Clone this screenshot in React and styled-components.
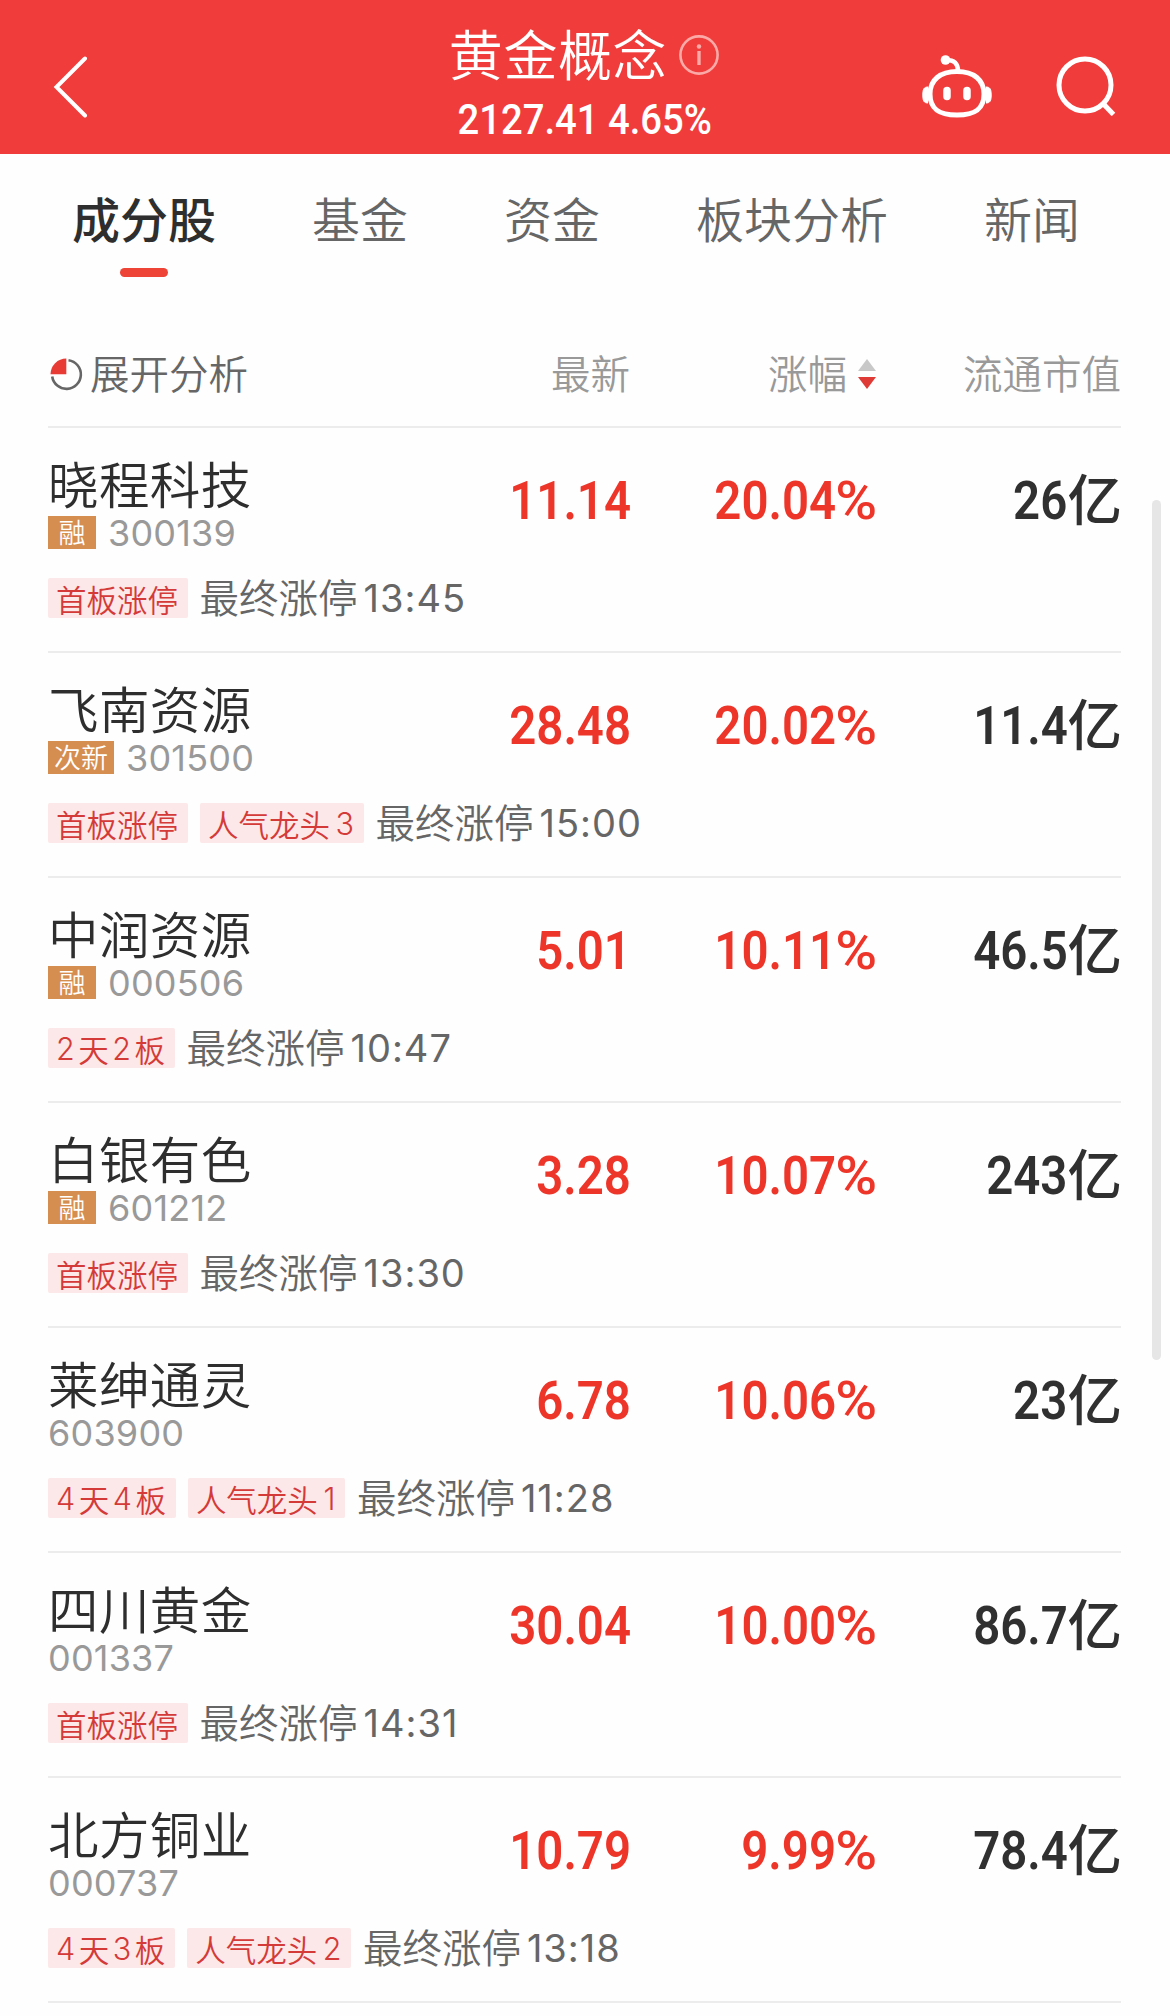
import styled, { createGlobalStyle } from "styled-components"

const stocks = [
  { name: "晓程科技", badge: "融", code: "300139", price: "11.14", change: "20.04", cap: "26", tags: ["首板涨停"], time: "13:45" },
  { name: "飞南资源", badge: "次新", code: "301500", price: "28.48", change: "20.02", cap: "11.4", tags: ["首板涨停", "人气龙头3"], time: "15:00" },
  { name: "中润资源", badge: "融", code: "000506", price: "5.01", change: "10.11", cap: "46.5", tags: ["2天2板"], time: "10:47" },
  { name: "白银有色", badge: "融", code: "601212", price: "3.28", change: "10.07", cap: "243", tags: ["首板涨停"], time: "13:30" },
  { name: "莱绅通灵", code: "603900", price: "6.78", change: "10.06", cap: "23", tags: ["4天4板", "人气龙头1"], time: "11:28" },
  { name: "四川黄金", code: "001337", price: "30.04", change: "10.00", cap: "86.7", tags: ["首板涨停"], time: "14:31" },
  { name: "北方铜业", code: "000737", price: "10.79", change: "9.99", cap: "78.4", tags: ["4天3板", "人气龙头2"], time: "13:18" },
]

const tabs = ["成分股", "基金", "资金", "板块分析", "新闻"]

const BackIcon = () => (
  <svg width="40" height="64" viewBox="0 0 40 64" fill="none" stroke="#fff" strokeWidth="4" strokeLinecap="round">
    <path d="M33 4.500 4.500 33 33 61.500" />
  </svg>
)

const InfoIcon = () => (
  <svg width="40" height="40" viewBox="0 0 40 40" fill="none" stroke="#fbaaa8" strokeWidth="2.6">
    <circle cx="20" cy="20" r="18.6" />
    <path d="M20 16v14" strokeWidth="3.4" />
    <circle cx="20" cy="11.5" r="2.2" fill="#fbaaa8" stroke="none" />
  </svg>
)

const RobotIcon = () => (
  <svg width="70" height="66" viewBox="0 0 70 66" fill="none" stroke="#fff">
    <path d="M35 17.500C52 17.500 62 26 62 40C62 55 53 61 35 61C17 61 8 55 8 40C8 26 18 17.500 35 17.500Z" strokeWidth="5" />
    <path d="M36 17C36 10 33 6 24 6" strokeWidth="4.500" />
    <circle cx="23.500" cy="6" r="4.800" fill="#fff" stroke="none" />
    <path d="M6 33C2 33 0.800 35 0.800 41C0.800 47 2 49 6 49M64 33C68 33 69.200 35 69.200 41C69.200 47 68 49 64 49" fill="#fff" strokeWidth="1" />
    <path d="M25 36.500v6M45 36.500v6" strokeWidth="7.500" strokeLinecap="round" />
  </svg>
)

const SearchIcon = () => (
  <svg width="62" height="62" viewBox="0 0 62 62" fill="none" stroke="#fff" strokeWidth="5">
    <circle cx="29" cy="31" r="26" />
    <path d="M47 49.500 57.500 60.500" />
  </svg>
)

const PieIcon = () => (
  <svg width="33" height="33" viewBox="0 0 33 33">
    <path d="M18.500 2.200A14.400 14.400 0 1 1 2.200 18.500" fill="none" stroke="#666" strokeWidth="2.600" />
    <path d="M16.300 0.500V16.300H0.500A15.800 15.800 0 0 1 16.300 0.500Z" fill="#e93b35" />
  </svg>
)

const SortIcon = () => (
  <svg width="18" height="30" viewBox="0 0 18 30">
    <path d="M9 0 18 12H0Z" fill="#c8c8c8" />
    <path d="M9 30 18 18H0Z" fill="#e03a36" />
  </svg>
)

// digits inside a tag use the latin font, so split them from the text
const Tag = ({ text }) => (
  <TagBox>
    {text.match(/\d+|\D+/g).map((part, i) => (
      <TagPart key={i} $number={/\d/.test(part)}>{part}</TagPart>
    ))}
  </TagBox>
)

const StockRow = ({ stock }) => (
  <Row>
    <Quote>
      <div>
        <Name>{stock.name}</Name>
        <CodeLine>
          {stock.badge && <Badge>{stock.badge}</Badge>}
          <Code>{stock.code}</Code>
        </CodeLine>
      </div>
      <Value $up><Digits>{stock.price}</Digits></Value>
      <Value $up><Digits>{stock.change}<Percent>%</Percent></Digits></Value>
      <Value><Digits>{stock.cap}</Digits><Unit>亿</Unit></Value>
    </Quote>
    <Notes>
      {stock.tags.map((tag) => <Tag key={tag} text={tag} />)}
      <LastLimit>最终涨停<Time>{stock.time}</Time></LastLimit>
    </Notes>
  </Row>
)

const App = () => (
  <Page>
    <GlobalStyle />
    <Header>
      <IconButton><BackIcon /></IconButton>
      <Heading>
        <Title><span>黄金概念</span><InfoIcon /></Title>
        <IndexValue>2127.41 4.65%</IndexValue>
      </Heading>
      <Actions>
        <IconButton><RobotIcon /></IconButton>
        <IconButton><SearchIcon /></IconButton>
      </Actions>
    </Header>
    <Tabs>
      {tabs.map((tab, i) => <Tab key={tab} $active={i === 0}>{tab}</Tab>)}
    </Tabs>
    <Table>
      <TableHead>
        <Expand><PieIcon />展开分析</Expand>
        <Column>最新</Column>
        <Column>涨幅<SortIcon /></Column>
        <Column>流通市值</Column>
      </TableHead>
      {stocks.map((stock) => <StockRow key={stock.code} stock={stock} />)}
    </Table>
    <ScrollThumb />
  </Page>
)

export default App


const GlobalStyle = createGlobalStyle`
  * {
    box-sizing: border-box;
  }

  body {
    margin: 0;
    background: #fefefe;
    font-family: Inter, "Noto Sans CJK SC", sans-serif;
  }

  svg {
    display: block;
    flex: none;
  }
`

const Page = styled.div`
  position: relative;
  width: 1170px;
  height: 2016px;
  overflow: hidden;
`

const Header = styled.header`
  display: grid;
  grid-template-columns: 1fr auto 1fr;
  height: 154px;
  padding: 0 52px;
  background: #f03d3b;
  color: #fff;
`

const IconButton = styled.button`
  display: flex;
  padding: 0;
  border: none;
  background: none;
  cursor: pointer;
  align-self: start;
  margin-top: 54px;
`

const Heading = styled.div`
  display: flex;
  flex-direction: column;
  align-items: center;
  padding-top: 25px;
`

const Title = styled.h1`
  display: flex;
  align-items: center;
  gap: 12px;
  height: 60px;
  margin: 0;
  padding-right: 2px;
  font: 350 54px/60px "Noto Sans CJK SC", sans-serif;
  letter-spacing: 0.6px;

  span {
    padding-bottom: 4px;
  }
`

const IndexValue = styled.div`
  font: 500 42px/50px Roboto, sans-serif;
  margin-top: 10px;
  transform: scaleX(0.91);
`

const Actions = styled.div`
  display: flex;
  justify-content: flex-end;
  gap: 64px;
`

const Tabs = styled.nav`
  display: flex;
  gap: 96px;
  height: 166px;
  padding: 28px 72px 0;
`

const Tab = styled.div`
  display: flex;
  flex-direction: column;
  align-items: center;
  font-family: "Noto Sans CJK SC", sans-serif;
  font-size: 48px;
  line-height: 70px;
  font-weight: ${({ $active }) => ($active ? 500 : 350)};
  color: ${({ $active }) => ($active ? "#2e2e2e" : "#666")};

  &::after {
    content: "";
    width: 48px;
    height: 9px;
    margin-top: 16px;
    border-radius: 5px;
    background: ${({ $active }) => ($active ? "#ee4438" : "transparent")};
  }
`

const Table = styled.main`
  padding: 0 49px 0 48px;
`

const TableHead = styled.div`
  display: grid;
  grid-template-columns: 337px 246px 246px 244px;
  align-items: center;
  height: 108px;
  padding-bottom: 2px;
  border-bottom: 2px solid #ececec;
  font: 350 39.500px/60px "Noto Sans CJK SC", sans-serif;
  color: #999;

  svg {
    margin-top: 4px;
  }
`

const Expand = styled.div`
  display: flex;
  align-items: center;
  gap: 7px;
  padding-left: 2px;
  color: #666;
`

const Column = styled.div`
  display: flex;
  align-items: center;
  justify-content: flex-end;
  gap: 11px;
  padding-right: 1px;

  &:last-child {
    padding-right: 0;
  }
`

const Row = styled.section`
  height: 225px;
  padding-top: 27px;
  border-bottom: 2px solid #ececec;
`

const Quote = styled.div`
  display: grid;
  grid-template-columns: 337px 246px 246px 244px;
  height: 110px;
`

const Name = styled.div`
  margin-bottom: 6px;
  font: 350 50.500px/55px "Noto Sans CJK SC", sans-serif;
  letter-spacing: 0.4px;
  color: #2e2e2e;
`

const CodeLine = styled.div`
  display: flex;
  align-items: center;
  gap: 12px;
  height: 33px;
`

const Badge = styled.span`
  min-width: 48px;
  height: 33px;
  padding: 0 6px;
  text-align: center;
  background: #d68d50;
  color: #fff;
  font: 350 27px/32px "Noto Sans CJK SC", sans-serif;
`

const Code = styled.span`
  padding-top: 1px;
  font-size: 36px;
  line-height: 33px;
  letter-spacing: 0.2px;
  color: #999;
`

const Value = styled.div`
  display: flex;
  justify-content: flex-end;
  height: 60px;
  padding-top: 15px;
  color: ${({ $up }) => ($up ? "#ee3529" : "#303030")};
`

const Digits = styled.span`
  font: 600 54.500px/60px Roboto, sans-serif;
  transform: scaleX(0.87);
  transform-origin: right;
`

const Percent = styled.span`
  display: inline-block;
  margin-left: 7px;
  font-weight: 500;
  transform: scaleX(1.2);
  transform-origin: right;
`

const Unit = styled.span`
  margin-right: -1px;
  font: 500 54.500px/54px "Noto Sans CJK SC", sans-serif;
`

const Notes = styled.div`
  display: flex;
  align-items: center;
  gap: 12px;
  height: 66px;
`

const TagBox = styled.span`
  display: flex;
  gap: 3.500px;
  height: 40px;
  padding: 1px 10px 0 8px;
  background: #fde8e9;
  border-radius: 2px;
  color: #d33a38;
`

const TagPart = styled.span`
  font-family: ${({ $number }) => ($number ? "Inter" : '"Noto Sans CJK SC"')}, sans-serif;
  font-weight: 350;
  font-size: 30.500px;
  line-height: 40px;

  &:last-child {
    margin-left: ${({ $number }) => ($number ? "2px" : 0)};
  }
`

const LastLimit = styled.span`
  display: flex;
  margin-left: -0.5px;
  color: #666;
  font: 350 39.500px/52px "Noto Sans CJK SC", sans-serif;
`

const Time = styled.span`
  padding-left: 6px;
  font: 400 38px/56px Inter, sans-serif;
  letter-spacing: 1px;
`

const ScrollThumb = styled.div`
  position: absolute;
  top: 500px;
  right: 9px;
  width: 9px;
  height: 860px;
  border-radius: 5px;
  background: #e6e6e6;
`
